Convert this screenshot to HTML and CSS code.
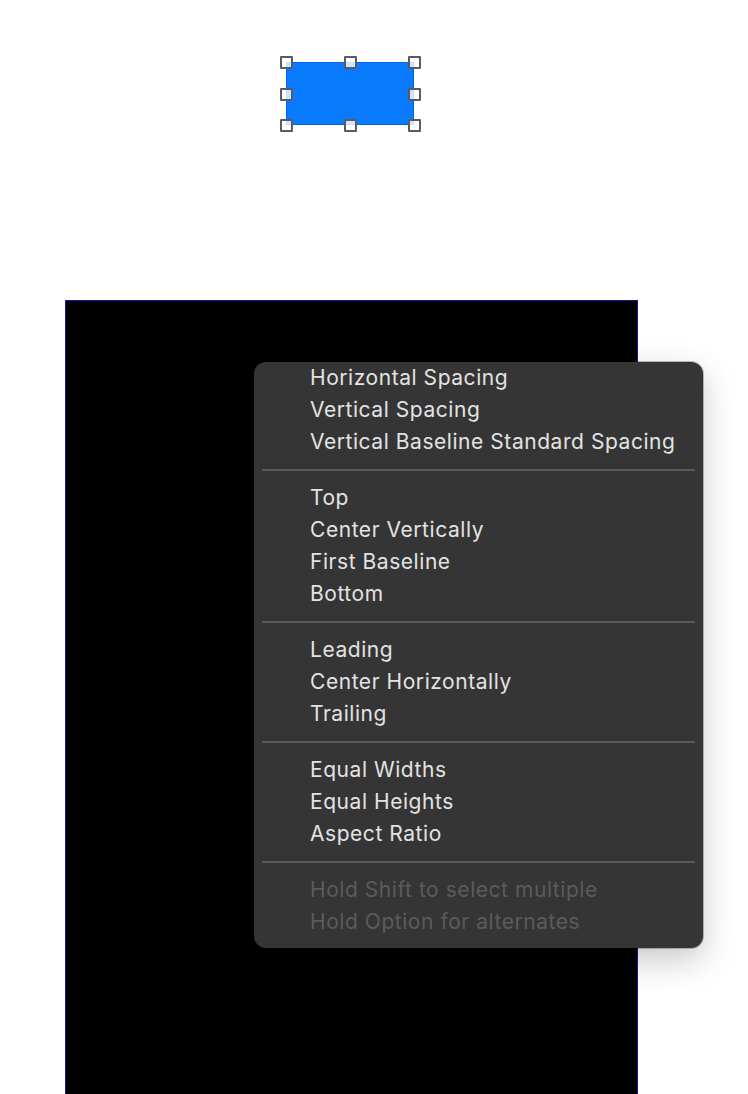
FILE: index.html
```html
<!DOCTYPE html>
<html lang="en">
<head>
    <meta charset="UTF-8">
    <meta name="viewport" content="width=device-width, initial-scale=1.0">
    <title>Constraints</title>
    <link rel="stylesheet" href="styles.css">
</head>
<body>
    <div class="stage">
        <div class="shape">
            <span class="handle h-tl"></span>
            <span class="handle h-tc"></span>
            <span class="handle h-tr"></span>
            <span class="handle h-ml"></span>
            <span class="handle h-mr"></span>
            <span class="handle h-bl"></span>
            <span class="handle h-bc"></span>
            <span class="handle h-br"></span>
        </div>
    </div>

    <div class="panel"></div>

    <div class="menu">
        <div class="item">Horizontal Spacing</div>
        <div class="item">Vertical Spacing</div>
        <div class="item">Vertical Baseline Standard Spacing</div>
        <div class="sep"></div>
        <div class="item">Top</div>
        <div class="item">Center Vertically</div>
        <div class="item">First Baseline</div>
        <div class="item">Bottom</div>
        <div class="sep"></div>
        <div class="item">Leading</div>
        <div class="item">Center Horizontally</div>
        <div class="item">Trailing</div>
        <div class="sep"></div>
        <div class="item">Equal Widths</div>
        <div class="item">Equal Heights</div>
        <div class="item">Aspect Ratio</div>
        <div class="sep"></div>
        <div class="item disabled">Hold Shift to select multiple</div>
        <div class="item disabled">Hold Option for alternates</div>
    </div>
</body>
</html>
```

FILE: styles.css
```css
body {
    margin: 0;
    background: #fff;
    font-family: Inter, "Noto Sans", sans-serif;
    overflow: hidden;
}
.stage {
    height: 300px;
    padding-top: 62px;
    box-sizing: border-box;
}
.shape {
    position: relative;
    margin-left: 286px;
    width: 128px;
    height: 63px;
    background: #0a7bff;
    box-shadow: inset 0 0 0 1px #0062e0;
}
.handle {
    position: absolute;
    width: 9px;
    height: 9px;
    border: 2px solid #5c5c5c;
    border-radius: 1px;
    background: rgba(255, 255, 255, 0.8);
    margin: -6px 0 0 -6px;
}
.h-tl { left: 0; top: 0; }
.h-tc { left: 64px; top: 0; }
.h-tr { left: 128px; top: 0; }
.h-ml { left: 0; top: 32px; }
.h-mr { left: 128px; top: 32px; }
.h-bl { left: 0; top: 63px; }
.h-bc { left: 64px; top: 63px; }
.h-br { left: 128px; top: 63px; }
.panel {
    margin-left: 65px;
    width: 571px;
    height: 800px;
    background: #000;
    border: 1px solid #1414a0;
    border-bottom: none;
}
.menu {
    position: absolute;
    left: 254px;
    top: 362px;
    width: 449px;
    padding-bottom: 10px;
    background: #353535;
    border-radius: 12px;
    box-shadow: 0 0 0 1px rgba(0, 0, 0, 0.25), 0 12px 34px rgba(0, 0, 0, 0.22);
}
.item {
    height: 32px;
    line-height: 32px;
    padding-left: 56px;
    font-size: 21px;
    letter-spacing: 0.55px;
    color: #e3e3e3;
    white-space: nowrap;
}
.item.disabled {
    color: #5b5b5b;
}
.sep {
    height: 24px;
    margin: 0 8px;
    background: linear-gradient(#5a5a5a, #5a5a5a) no-repeat 0 11px / 100% 2px;
}
```
